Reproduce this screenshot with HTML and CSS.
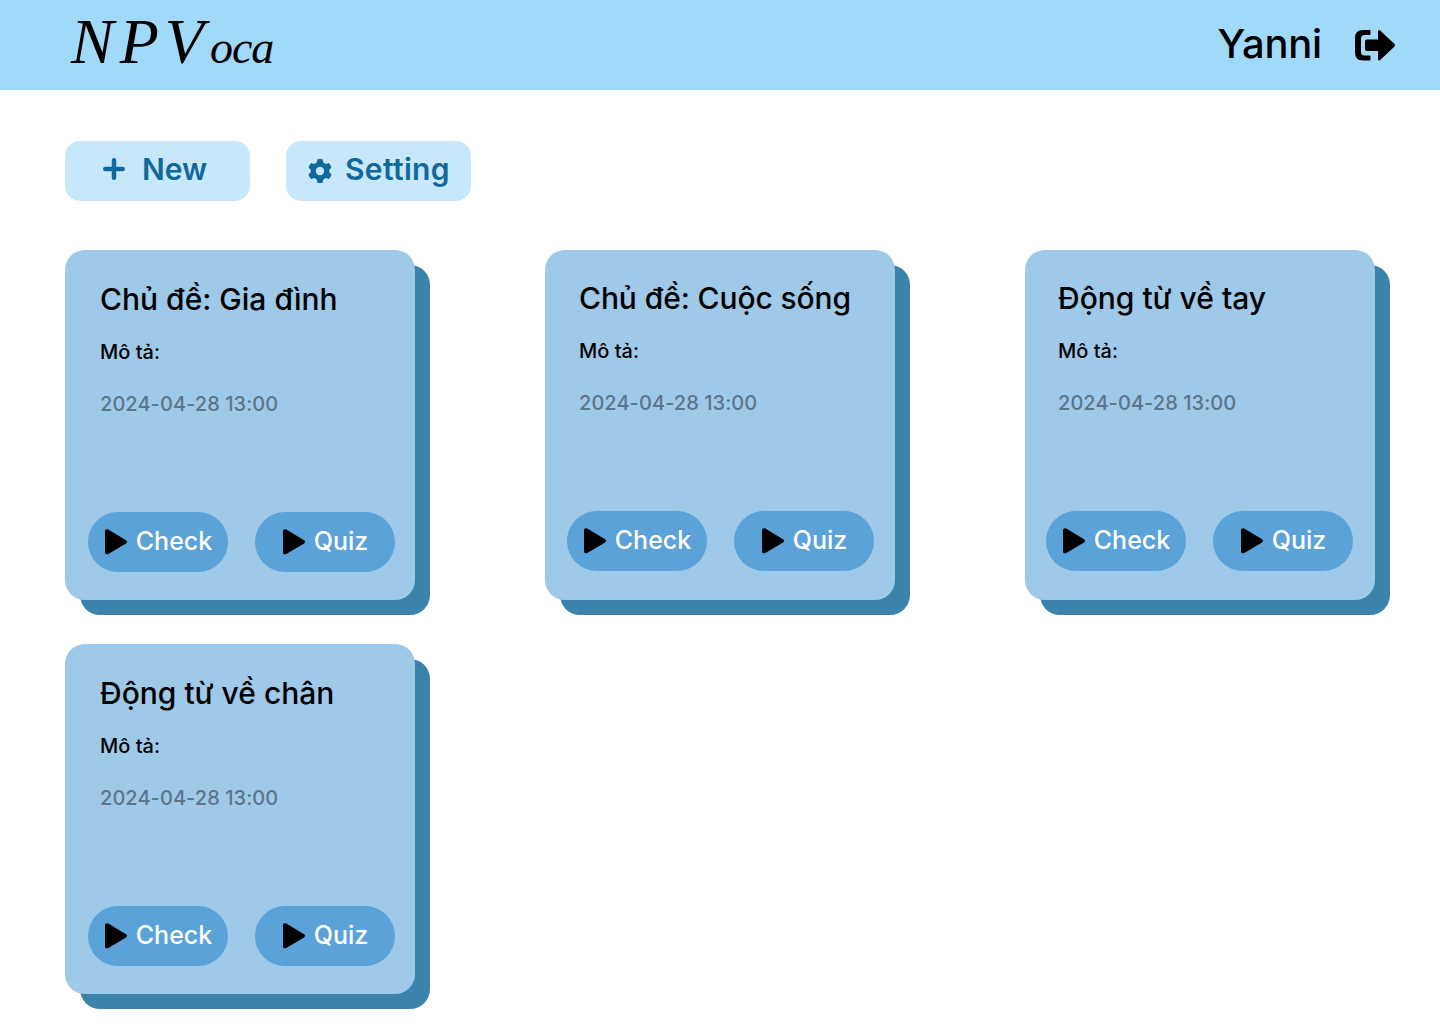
FILE: index.html
```html
<!DOCTYPE html>
<html lang="vi">
<head>
<meta charset="utf-8">
<title>NPVoca</title>
<link rel="stylesheet" href="styles.css">
</head>
<body>
<svg class="sprite" aria-hidden="true">
  <symbol id="play" viewBox="0 0 22 26"><path d="M0 2.200C0 .5 1.800-.2 3.300.6L21 11.200Q23 12.800 21 14.400L3.300 25C1.800 25.800 0 25.100 0 23.400Z"/></symbol>
</svg>
<header class="topbar">
  <div class="logo">NPV<span class="logo-tail">oca</span></div>
  <div class="user">
    <span class="user-name">Yanni</span>
    <svg class="logout" viewBox="0 0 40 31"><path d="M14.500 0Q15.500 0 15.500 1V4Q15.500 5 14.500 5H9.500Q6 5 6 8.500V22Q6 25.500 9.500 25.500H14.500Q15.500 25.500 15.500 26.500V29.500Q15.500 30.500 14.500 30.500H8Q0 30.500 0 22.500V8Q0 0 8 0Z"/><path d="M23 1.500Q23-.9 25.200.6L39.500 14Q40.500 15.200 39.500 16.400L25.200 29.900Q23 31.300 23 29V21H12Q10 21 10 19V11.500Q10 9.500 12 9.500H23Z"/></svg>
  </div>
</header>
<main class="content">
  <div class="toolbar">
    <button class="tool tool-new"><svg class="plus" viewBox="0 0 22 22"><path d="M11 2.300V19.700M2.300 11H19.700"/></svg><span>New</span></button>
    <button class="tool tool-setting"><svg class="gear" viewBox="0 0 24 24"><path fill-rule="evenodd" d="M9.500.3Q12-.3 14.500.3L15.300 3.500L17.700 4.900L20.900 3.900Q22.900 6.100 23.500 8.500L21.300 10.700V13.300L23.500 15.500Q22.900 17.900 20.900 20.100L17.700 19.100L15.300 20.500L14.500 23.700Q12 24.300 9.500 23.700L8.700 20.500L6.300 19.100L3.100 20.100Q1.100 17.900.5 15.500L2.700 13.300V10.700L.5 8.500Q1.100 6.100 3.100 3.900L6.300 4.900L8.700 3.500ZM12 7.800A4.200 4.200 0 1 0 12 16.200A4.200 4.200 0 1 0 12 7.800Z"/></svg><span>Setting</span></button>
  </div>
  <div class="cards">
    <article class="card">
      <h2 class="title">Chủ đề: Gia đình</h2>
      <p class="desc">Mô tả:</p>
      <time class="date">2024-04-28 13:00</time>
      <div class="actions">
        <button class="pill"><svg class="play"><use href="#play"/></svg><span>Check</span></button>
        <button class="pill"><svg class="play"><use href="#play"/></svg><span>Quiz</span></button>
      </div>
    </article>
    <article class="card card-middle">
      <h2 class="title">Chủ đề: Cuộc sống</h2>
      <p class="desc">Mô tả:</p>
      <time class="date">2024-04-28 13:00</time>
      <div class="actions">
        <button class="pill"><svg class="play"><use href="#play"/></svg><span>Check</span></button>
        <button class="pill"><svg class="play"><use href="#play"/></svg><span>Quiz</span></button>
      </div>
    </article>
    <article class="card card-right">
      <h2 class="title">Động từ về tay</h2>
      <p class="desc">Mô tả:</p>
      <time class="date">2024-04-28 13:00</time>
      <div class="actions">
        <button class="pill"><svg class="play"><use href="#play"/></svg><span>Check</span></button>
        <button class="pill"><svg class="play"><use href="#play"/></svg><span>Quiz</span></button>
      </div>
    </article>
    <article class="card">
      <h2 class="title">Động từ về chân</h2>
      <p class="desc">Mô tả:</p>
      <time class="date">2024-04-28 13:00</time>
      <div class="actions">
        <button class="pill"><svg class="play"><use href="#play"/></svg><span>Check</span></button>
        <button class="pill"><svg class="play"><use href="#play"/></svg><span>Quiz</span></button>
      </div>
    </article>
  </div>
</main>
</body>
</html>
```
FILE: styles.css
```css
* { box-sizing: border-box; }
body { margin: 0; min-height: 1024px; background: #fff; color: #000; font-family: Inter, sans-serif; font-weight: 500; font-variant-ligatures: no-common-ligatures; }
button { border: 0; font: inherit; padding: 0; }
.sprite { display: none; }
.topbar { height: 90px; background: #a1d9f8; display: flex; justify-content: space-between; padding: 0 45px 0 71px; }
.logo { font: italic 400 64px/84px "Liberation Serif", serif; letter-spacing: 6px; white-space: nowrap; }
.logo-tail { font-size: 46px; letter-spacing: -1px; }
.user { display: flex; align-items: center; gap: 33px; }
.user-name { font-size: 40px; line-height: 48px; font-weight: 450; letter-spacing: -.2px; padding-bottom: 2px; }
.logout { width: 40px; height: 31px; }
.content { padding: 51px 50px 0 65px; }
.toolbar { display: flex; gap: 36px; margin-bottom: 49px; }
.tool { width: 185px; height: 60px; border-radius: 15px; background: #c7e8fb; color: #11689b; font-size: 30px; line-height: 36px; font-weight: 600; display: flex; align-items: center; padding-bottom: 4px; }
.tool-new { padding-left: 38px; gap: 17px; }
.tool-setting { padding-left: 22px; gap: 13px; letter-spacing: .35px; }
.plus { width: 22px; height: 22px; fill: none; stroke: currentColor; stroke-width: 4.5; stroke-linecap: round; }
.gear { width: 24px; height: 24px; fill: currentColor; margin-top: 4px; }
.cards { display: grid; grid-template-columns: repeat(3, 350px); justify-content: space-between; row-gap: 44px; padding-right: 15px; padding-bottom: 30px; }
.card { --inset: 35px; --top: 31px; height: 350px; border-radius: 20px; background: #9fc9e9; box-shadow: 15px 15px 0 #3c83ac; padding: var(--top) 0 0 var(--inset); }
.card-middle { --inset: 34px; --top: 30px; }
.card-right { --inset: 33px; --top: 30px; }
.title { margin: 0; font-size: 30px; line-height: 36px; font-weight: 500; white-space: nowrap; }
.card-middle .title { letter-spacing: -.1px; }
.desc { margin: 23px 0 0; font-size: 20px; line-height: 24px; }
.date { display: block; margin-top: 28px; font-size: 20px; line-height: 24px; letter-spacing: .06px; color: #5b758a; }
.actions { display: flex; gap: 27px; margin: 96px 0 0 -12px; }
.pill { width: 140px; height: 60px; border-radius: 30px; background: #5aa2d8; color: #fff; font-size: 25px; line-height: 30px; display: flex; align-items: center; justify-content: center; gap: 9px; padding: 0 0 1px 1px; }
.pill span { padding-bottom: 1px; }
.play { width: 22px; height: 26px; fill: #000; }
```
